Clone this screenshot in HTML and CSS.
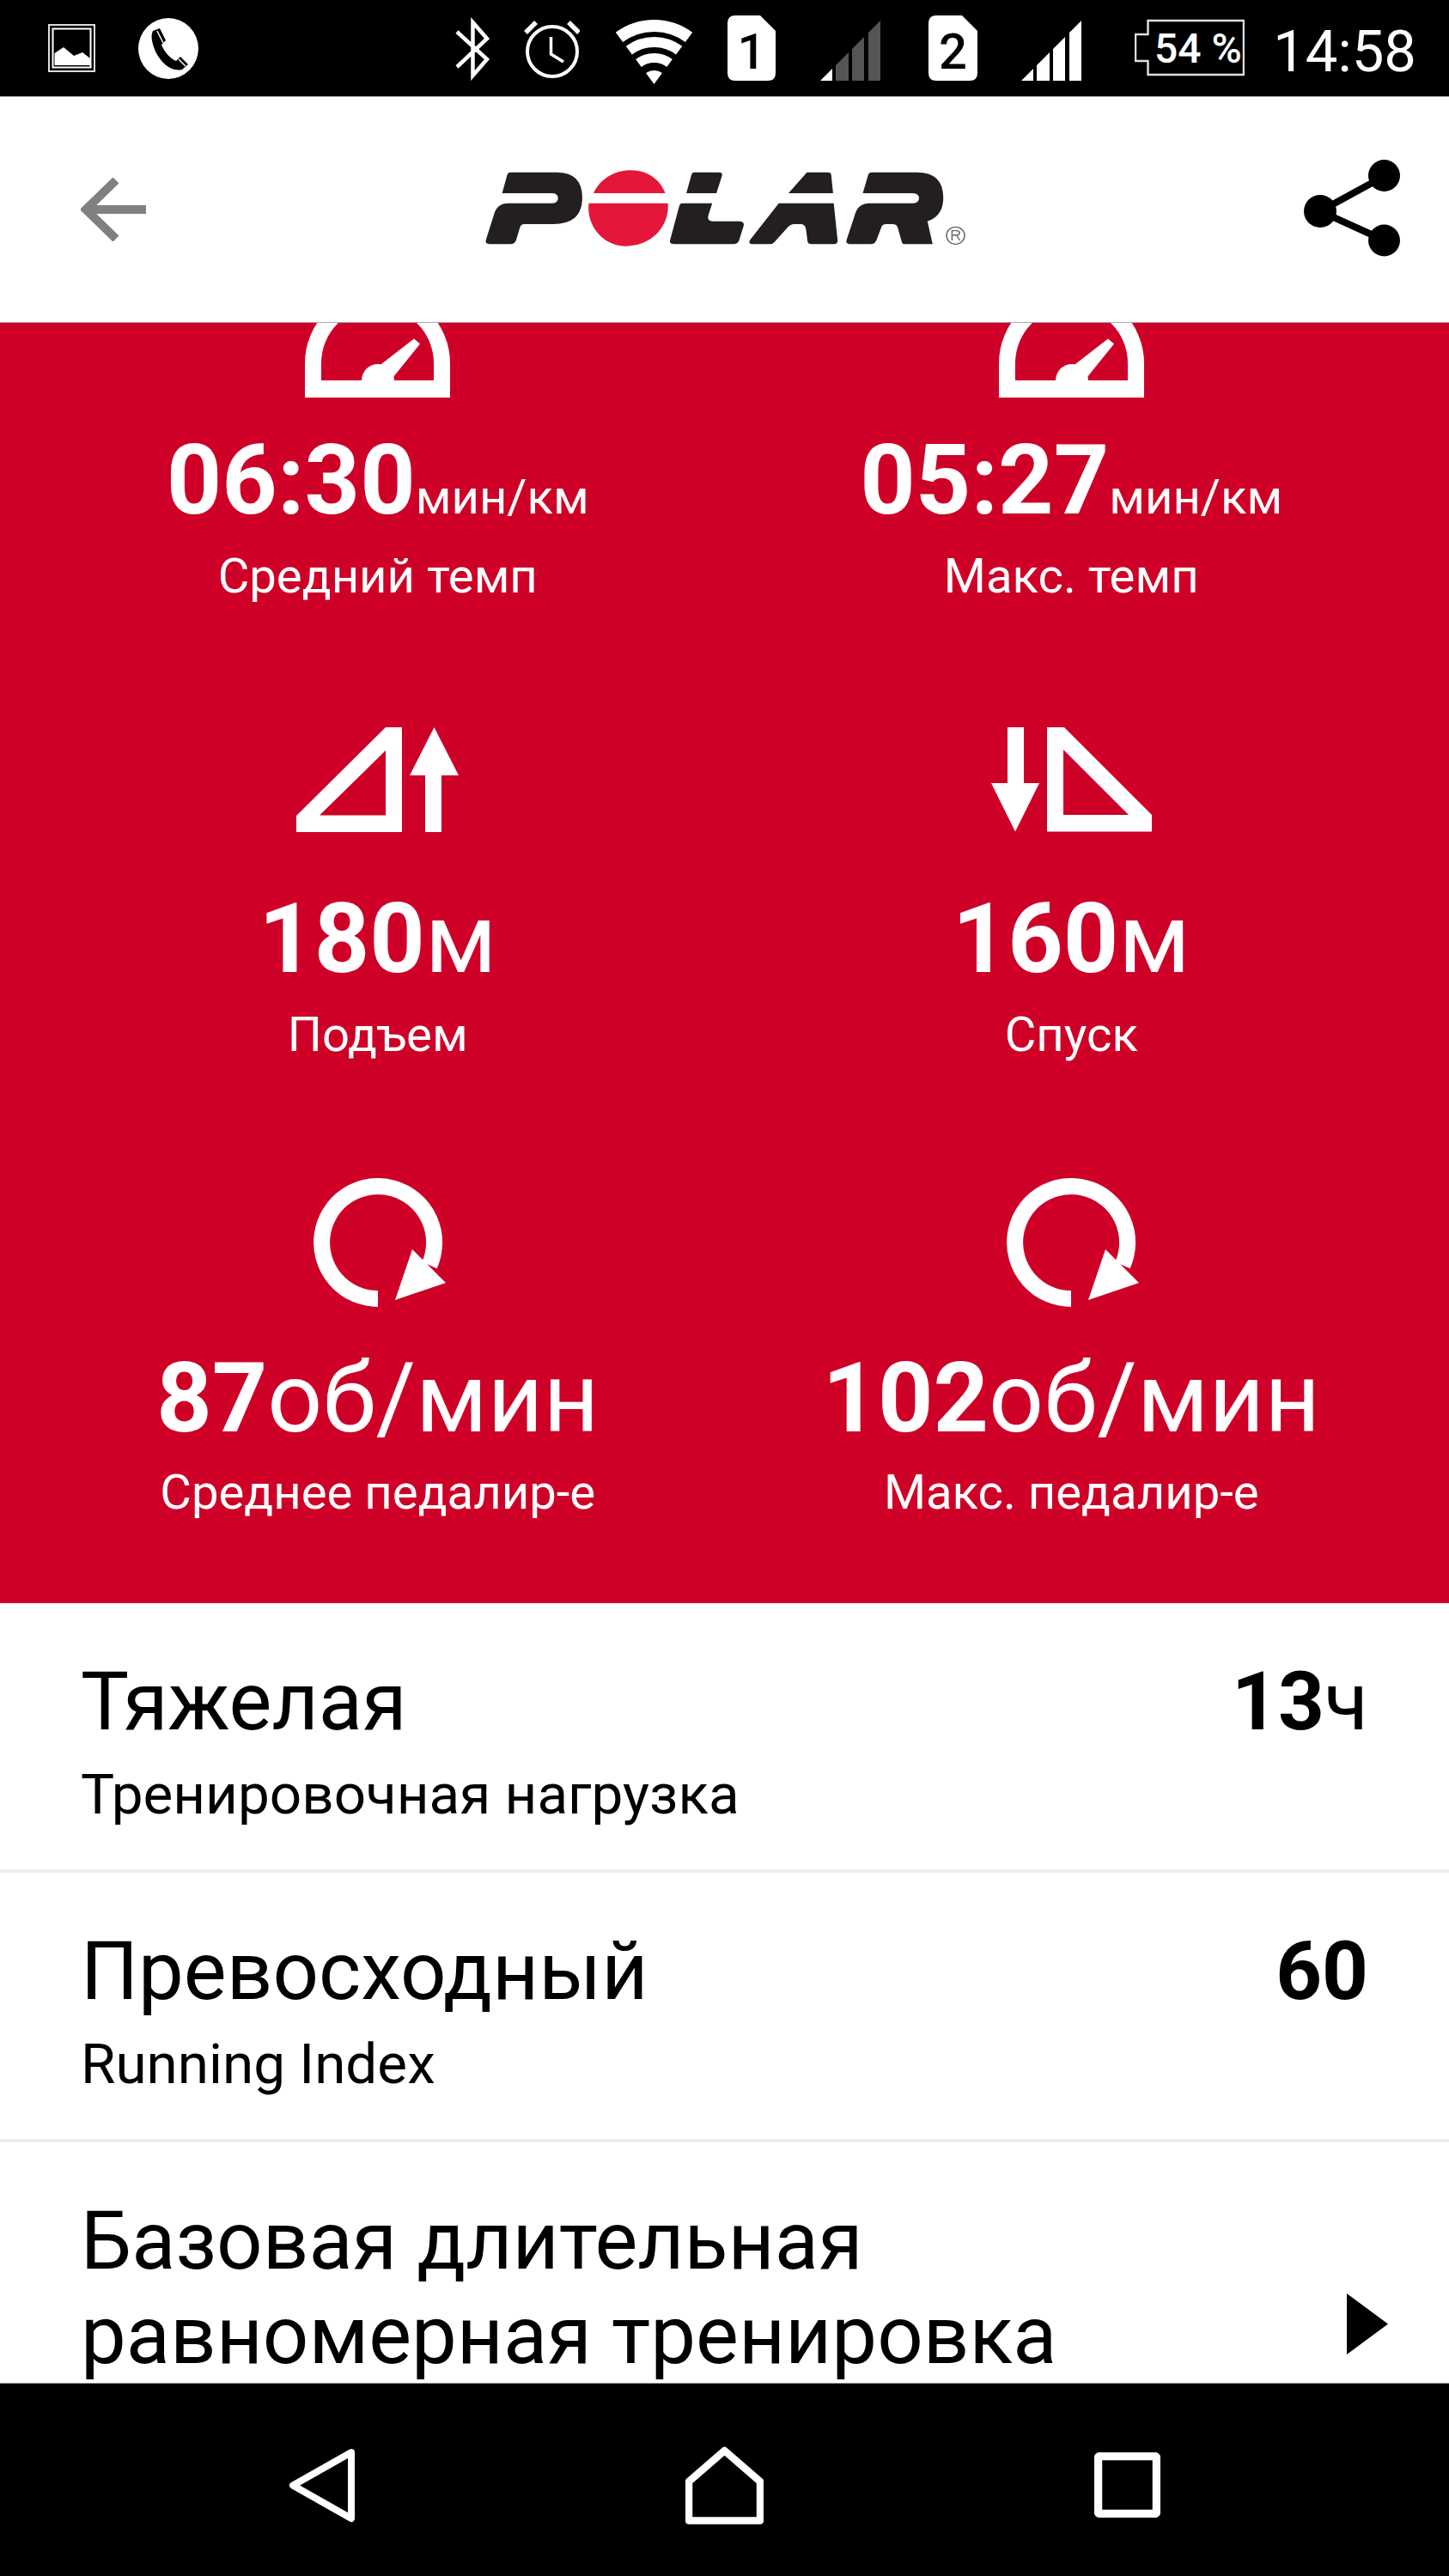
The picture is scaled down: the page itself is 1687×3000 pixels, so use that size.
FILE: index.html
```html
<!DOCTYPE html>
<html lang="ru">
<head>
<meta charset="utf-8">
<title>Polar</title>
<link rel="stylesheet" href="styles.css">
</head>
<body>
<div class="screen">
  <div class="status">
    <svg class="ic" width="55" height="80" viewBox="56 18 55 80">
      <rect x="57" y="29" width="53" height="54" fill="none" stroke="#ddd" stroke-width="2"/>
      <rect x="61.5" y="33.5" width="44" height="45" fill="none" stroke="#fff" stroke-width="2"/>
      <path d="M63.5,76V62L74,55L86,65L96,61L105,68V76Z" fill="#fff"/>
    </svg>
    <svg class="ic m50" width="70" height="80" viewBox="161 18 70 80">
      <ellipse cx="196" cy="56.5" rx="35" ry="35.5" fill="#fff"/>
      <path d="M178,36L186,33L193,47L188,52C191,60 198,68 205,71L210,66L219,75L212,81C200,84 188,74 181,60C177,50 175,42 178,36Z" fill="#000"/>
      <path d="M183,36L190,50M208,69L216,77" stroke="#fff" stroke-width="1.5" fill="none"/>
    </svg>
    <div class="right">
      <svg class="ic" width="40" height="80" viewBox="530 18 40 80">
        <path d="M532,37L567,69L550.500,88V26L567,45L532,78" fill="none" stroke="#fff" stroke-width="4.500"/>
      </svg>
      <svg class="ic m40" width="65" height="80" viewBox="610 18 65 80">
        <circle cx="643" cy="60" r="29" fill="none" stroke="#fff" stroke-width="4"/>
        <path d="M641.500,43V63L656,72" fill="none" stroke="#fff" stroke-width="3.500"/>
        <path d="M624,26L612,38M662,26L674,38" fill="none" stroke="#fff" stroke-width="5.500"/>
      </svg>
      <svg class="ic m42" width="90" height="80" viewBox="717 18 90 80">
        <g fill="none" stroke="#fff">
          <path d="M721,43.300A68,68 0 0 1 802,43.300" stroke-width="14"/>
          <path d="M732.300,58.600A49,49 0 0 1 790.700,58.600" stroke-width="12"/>
          <path d="M743.400,73.500A30.500,30.500 0 0 1 779.600,73.500" stroke-width="11"/>
        </g>
        <path d="M761.500,98L752,85Q761.500,79 771,85Z" fill="#fff"/>
      </svg>
      <svg class="ic m40" width="56" height="80" viewBox="847 18 56 80">
        <path d="M856,18H885L903,36V85Q903,94 894,94H856Q847,94 847,85V27Q847,18 856,18Z" fill="#fff"/>
        <text class="sim" x="875" y="80">1</text>
      </svg>
      <svg class="ic m52" width="70" height="80" viewBox="955 18 70 80">
        <path d="M955,94L969,80V94Z" fill="#fff"/>
        <path d="M973,94V76L988,61V94ZM992,94V57L1006,43V94ZM1011,94V38L1025,24V94Z" fill="#555"/>
      </svg>
      <svg class="ic m56" width="57" height="80" viewBox="1081 18 57 80">
        <path d="M1090,18H1120L1138,36V85Q1138,94 1129,94H1090Q1081,94 1081,85V27Q1081,18 1090,18Z" fill="#fff"/>
        <text class="sim" x="1109.500" y="80">2</text>
      </svg>
      <svg class="ic m51" width="70" height="80" viewBox="1189 18 70 80">
        <path d="M1189,94L1203,80V94ZM1207,94V76L1222,61V94ZM1226,94V57L1240,43V94ZM1245,94V38L1259,24V94Z" fill="#fff"/>
      </svg>
      <svg class="ic m62" width="128" height="80" viewBox="1321 18 128 80">
        <path d="M1336.500,24H1448V87H1336.500V71H1322V40H1336.500Z" fill="none" stroke="#ddd" stroke-width="2.500"/>
        <text class="batt" x="1344" y="73">54 %</text>
      </svg>
      <span class="time">14:58</span>
    </div>
  </div>

  <header class="bar">
    <svg class="back" width="76" height="74" viewBox="94 207 76 74">
      <path d="M135,210L100,244L135,278M100,244H170" fill="none" stroke="#808080" stroke-width="10"/>
    </svg>
    <svg class="logo" width="590" height="115" viewBox="0 0 1568 345" preserveAspectRatio="none">
      <g fill="#231f20">
        <path d="M118,47H260Q340,47 340,135Q340,228 250,228H160Q150,228 147,240L135,285Q130,298 118,298H55Q38,298 42,283L68,190Q78,155 110,155H245Q265,155 265,137Q265,120 245,120H92L108,55Q110,47 118,47Z"/>
        <path d="M685,47H762Q776,47 772,60L755,120H662L678,55Q680,47 685,47Z"/>
        <path d="M650,155H742L730,197Q725,218 745,218H825Q843,218 839,235L825,285Q820,298 808,298H625Q608,298 612,283L640,165Q642,155 650,155Z"/>
        <path d="M1035,47H1100Q1110,47 1110,55L1116,120H978Z"/>
        <path d="M948,155H1118L1130,285Q1130,298 1118,298H1050Q1038,298 1037,288L1032,245Q1030,228 1015,228H995Q985,228 975,240L935,290Q930,298 920,298H870Q850,298 860,282Z"/>
        <path d="M1235,47H1375Q1457,47 1457,135Q1457,200 1408,218L1424,298H1335Q1330,298 1328,288L1316,240Q1313,228 1300,228H1280Q1268,228 1265,240L1250,285Q1245,298 1232,298H1172Q1153,298 1158,283L1185,190Q1195,155 1228,155H1360Q1382,155 1382,137Q1382,120 1360,120H1208L1225,55Q1227,47 1235,47Z"/>
      </g>
      <path d="M375,120C395,70 440,40 490,40C540,40 580,70 597,120ZM360,155H605C610,235 555,305 475,305C405,305 352,235 360,155Z" fill="#e4173a"/>
      <ellipse cx="1495" cy="268" rx="28" ry="30" fill="none" stroke="#666" stroke-width="4"/>
      <path d="M1484,285V251H1498Q1507,251 1507,259Q1507,267 1498,267H1484M1498,267L1508,285" fill="none" stroke="#666" stroke-width="4"/>
    </svg>
    <svg class="share" width="112" height="113" viewBox="1518 186 112 113">
      <path d="M1612,205L1537,246L1612,280" fill="none" stroke="#000" stroke-width="8"/>
      <circle cx="1611.500" cy="204.500" r="18.500"/>
      <circle cx="1537" cy="246" r="19"/>
      <circle cx="1611.500" cy="280" r="18.500"/>
    </svg>
  </header>

  <section class="stats">
    <div class="stat">
      <svg class="icon-gauge" width="169" height="87" viewBox="356 376 169 87">
        <path fill-rule="evenodd" fill="#fff" d="M356,463V423A84.500,84.500 0 0 1 525,423V463ZM375,443V423A65.500,65.500 0 0 1 506,423V443Z"/>
        <circle cx="441" cy="443" r="19" fill="#fff"/>
        <path d="M445,424L483,394.500L490,400.600L459,439V443H441Z" fill="#fff"/>
      </svg>
      <div class="value"><b>06:30</b><small>мин/км</small></div>
      <div class="label">Средний темп</div>
    </div>
    <div class="stat">
      <svg class="icon-gauge" width="169" height="87" viewBox="356 376 169 87">
        <path fill-rule="evenodd" fill="#fff" d="M356,463V423A84.500,84.500 0 0 1 525,423V463ZM375,443V423A65.500,65.500 0 0 1 506,423V443Z"/>
        <circle cx="441" cy="443" r="19" fill="#fff"/>
        <path d="M445,424L483,394.500L490,400.600L459,439V443H441Z" fill="#fff"/>
      </svg>
      <div class="value"><b>05:27</b><small>мин/км</small></div>
      <div class="label">Макс. темп</div>
    </div>
    <div class="stat">
      <svg class="icon-elev" width="189" height="122" viewBox="346 847 189 122">
        <path fill-rule="evenodd" fill="#fff" d="M346,969V950L450,847H469V969ZM373,949.500H450V874Z"/>
        <path d="M478,903L506.500,847L535,903H515V969H496V903Z" fill="#fff"/>
      </svg>
      <div class="value"><b>180</b>м</div>
      <div class="label">Подъем</div>
    </div>
    <div class="stat">
      <svg class="icon-elev" width="187" height="122" viewBox="1153 847 187 122">
        <path d="M1172,847H1191V912H1209L1181,968.500L1153,912H1172Z" fill="#fff"/>
        <path fill-rule="evenodd" fill="#fff" d="M1218,847H1238L1340,949V968.500H1218ZM1237,873V949H1313Z"/>
      </svg>
      <div class="value"><b>160</b>м</div>
      <div class="label">Спуск</div>
    </div>
    <div class="stat">
      <svg class="icon-cad" width="155" height="150" viewBox="365 1372 155 150">
        <path d="M440,1512.500A65.500,65.500 0 1 1 500,1473.500" fill="none" stroke="#fff" stroke-width="19"/>
        <path d="M480,1455L519,1494L460,1514Z" fill="#fff"/>
      </svg>
      <div class="value"><b>87</b>об/мин</div>
      <div class="label label-last">Среднее педалир-е</div>
    </div>
    <div class="stat">
      <svg class="icon-cad" width="155" height="150" viewBox="365 1372 155 150">
        <path d="M440,1512.500A65.500,65.500 0 1 1 500,1473.500" fill="none" stroke="#fff" stroke-width="19"/>
        <path d="M480,1455L519,1494L460,1514Z" fill="#fff"/>
      </svg>
      <div class="value"><b>102</b>об/мин</div>
      <div class="label label-last">Макс. педалир-е</div>
    </div>
  </section>

  <main class="list">
    <div class="row">
      <div>
        <div class="title">Тяжелая</div>
        <div class="sub">Тренировочная нагрузка</div>
      </div>
      <div class="amount"><b>13</b>ч</div>
    </div>
    <div class="row">
      <div>
        <div class="title">Превосходный</div>
        <div class="sub">Running Index</div>
      </div>
      <div class="amount"><b>60</b></div>
    </div>
    <div class="row row-last">
      <div class="title">Базовая длительная<br>равномерная тренировка</div>
      <svg class="chevron" width="48" height="71" viewBox="1568 2671 48 71">
        <path d="M1568,2671L1616,2706.500L1568,2742Z"/>
      </svg>
    </div>
  </main>

  <nav class="nav">
    <svg width="77" height="87" viewBox="337 2852 77 87">
      <path d="M410,2857L342,2895.500L410,2934Z" fill="none" stroke="#fff" stroke-width="8" stroke-linejoin="round"/>
    </svg>
    <svg width="91" height="92" viewBox="798 2847 91 92">
      <path d="M843.500,2853L885,2889V2934.500H802V2889Z" fill="none" stroke="#fff" stroke-width="8.500" stroke-linejoin="round"/>
    </svg>
    <svg width="77" height="76" viewBox="1275 2857 77 76">
      <rect x="1279.500" y="2861.500" width="68" height="67" rx="2" fill="none" stroke="#fff" stroke-width="9.500"/>
    </svg>
  </nav>
</div>
</body>
</html>
```
FILE: styles.css
```css
* { box-sizing: border-box; }
html, body { margin: 0; padding: 0; background: #fff; }
body { font-family: Roboto, "Noto Sans", sans-serif; }

.screen {
  width: 1687px;
  height: 3000px;
  display: flex;
  flex-direction: column;
  overflow: hidden;
}

/* status bar */
.status {
  flex: none;
  height: 113px;
  background: #000;
  border-bottom: 1px solid #aaa;
  padding: 18px 38px 0 56px;
  display: flex;
  align-items: flex-start;
  color: #fff;
}
.right { margin-left: auto; display: flex; align-items: flex-start; }
.ic { display: block; flex: none; }
.m40 { margin-left: 40px; }
.m42 { margin-left: 42px; }
.m50 { margin-left: 50px; }
.m51 { margin-left: 51px; }
.m52 { margin-left: 52px; }
.m56 { margin-left: 56px; }
.m62 { margin-left: 62px; }
.sim { font: 500 58px Roboto, sans-serif; fill: #000; text-anchor: middle; }
.batt { font: 500 48px Roboto, sans-serif; fill: #fff; }
.time { font-size: 67px; line-height: 84px; margin-left: 33px; }

/* app bar */
.bar {
  flex: none;
  height: 263px;
  background: #fff;
  border-bottom: 1px solid #aaa;
  padding: 0 57px 0 94px;
  display: flex;
  align-items: center;
}
.back, .logo, .share { display: block; flex: none; }
.logo { margin-left: 380px; margin-bottom: 3px; }
.share { margin-left: auto; margin-bottom: 3px; }

/* red stats */
.stats {
  flex: none;
  height: 1491px;
  background: #ce0027;
  color: #fff;
  padding: 0 36px;
  display: grid;
  grid-template-columns: 1fr 1fr;
  grid-auto-rows: min-content;
}
.stat { display: flex; flex-direction: column; align-items: center; text-align: center; }
.icon-gauge { display: block; margin-bottom: 37px; }
.icon-elev { display: block; margin-top: 144px; margin-bottom: 65px; }
.icon-cad { display: block; margin: 135px 0 47px 5px; }
.value { font-size: 112.5px; line-height: 120px; white-space: nowrap; }
.value b { font-weight: 700; }
.value small { font-size: 56.25px; line-height: 1; }
.label { font-size: 56.25px; line-height: 64px; margin-top: 19px; white-space: nowrap; }
.label-last { margin-top: 17px; }

/* list */
.list { flex: 1; min-height: 0; overflow: hidden; background: #fff; color: #000; }
.row {
  display: flex;
  justify-content: space-between;
  align-items: flex-start;
  padding: 60px 94px 47px;
  height: 314px;
  border-bottom: 4px solid #eee;
}
.row-last { height: auto; border-bottom: 0; padding-bottom: 0; }
.title { font-size: 94px; line-height: 110px; }
.sub { font-size: 65.6px; line-height: 80px; margin-top: 13px; }
.amount { font-size: 94px; line-height: 110px; white-space: nowrap; }
.amount b { font-weight: 700; }
.chevron { display: block; align-self: flex-end; margin-bottom: 33px; margin-right: -23px; }

/* nav */
.nav {
  flex: none;
  height: 225px;
  background: #000;
  border-top: 1px solid #999;
  padding: 71px 0 59px;
  display: grid;
  grid-template-columns: repeat(3, 469px);
  justify-content: center;
  align-items: center;
  justify-items: center;
}
.nav svg { display: block; }
```
